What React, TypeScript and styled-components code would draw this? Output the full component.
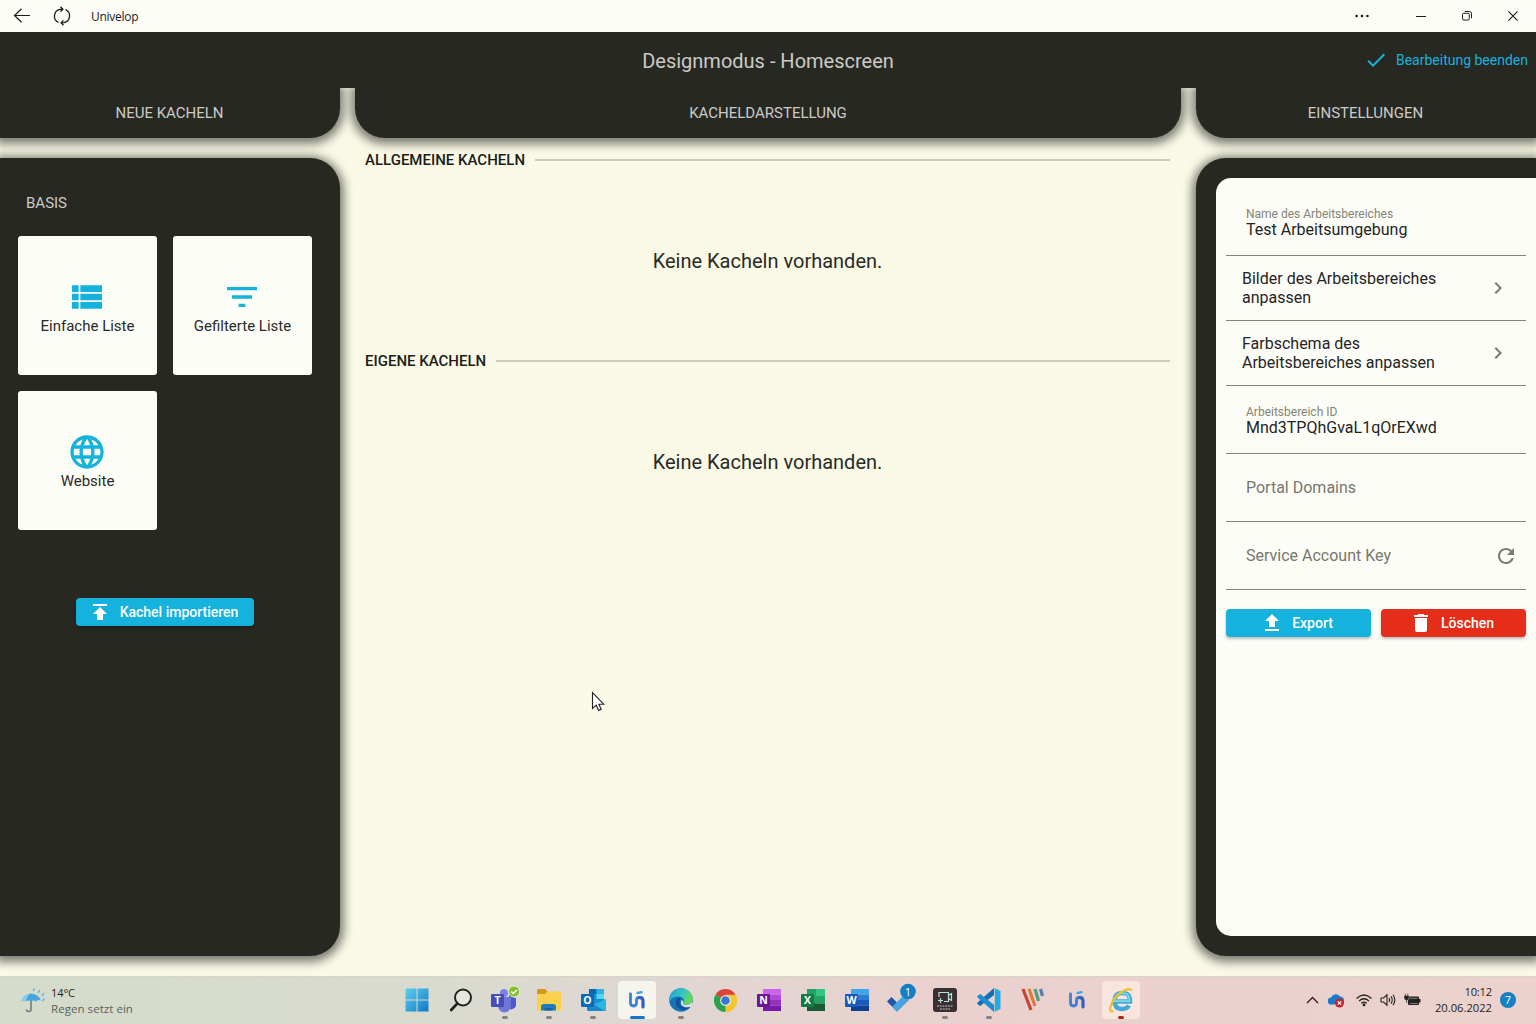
import React from "react";
import styled, { createGlobalStyle } from "styled-components";

const dark = "#282823";
const page = "#f9f9e6";
const white = "#fdfdf8";
const cyan = "#16b2de";
const shadow = "0 2px 10px 4px rgba(0, 0, 0, 0.5)";

const GlobalStyle = createGlobalStyle`
  * { box-sizing: border-box; }
  body { margin: 0; background: ${page}; font-family: Roboto, "Liberation Sans", sans-serif; }
  svg { display: block; flex: none; }
`;

const Screen = styled.div`
  position: relative;
  display: flex;
  flex-direction: column;
  width: 1536px;
  height: 1024px;
  overflow: hidden;
  background: ${page};
`;

/* Window title bar */
const TitleBar = styled.div`
  display: flex;
  align-items: center;
  justify-content: space-between;
  height: 32px;
  flex: none;
  background: ${white};
  padding: 0 16px 0 13px;
  position: relative;
  z-index: 3;
`;
const TitleGroup = styled.div<{ $gap: number }>`
  display: flex;
  align-items: center;
  gap: ${(p) => p.$gap}px;
`;
const WindowTitle = styled.span`
  font: 12px/16px "Open Sans", "Noto Sans", sans-serif;
  color: #1b1b1b;
  letter-spacing: -0.28px;
  padding-top: 1px;
`;
const WindowButtons = styled.div`
  display: flex;
  align-items: center;
  margin-right: -16px;
`;
const WindowButton = styled.div<{ $w: number }>`
  display: flex;
  justify-content: center;
  width: ${(p) => p.$w}px;
`;

/* App header */
const Header = styled.header`
  display: grid;
  grid-template-columns: 1fr auto 1fr;
  align-items: center;
  height: 56px;
  flex: none;
  background: ${dark};
  color: #cbcbc6;
  padding: 0 8px;
  position: relative;
  z-index: 2;
`;
const HeaderTitle = styled.h1`
  grid-column: 2;
  margin: 0;
  font-size: 20px;
  font-weight: 400;
  line-height: 24px;
  padding-top: 2px;
`;
const FinishButton = styled.div`
  display: flex;
  align-items: center;
  justify-content: flex-end;
  gap: 8px;
  color: ${cyan};
  font-size: 14px;
  line-height: 20px;
`;

const columns = "340px 826px 340px";

const Tabs = styled.div`
  display: grid;
  grid-template-columns: ${columns};
  column-gap: 15px;
  height: 50px;
  flex: none;
  position: relative;
  z-index: 1;
`;
const Tab = styled.div<{ $radius: string; $inset?: number }>`
  display: flex;
  align-items: center;
  justify-content: center;
  padding-right: ${(p) => p.$inset || 0}px;
  background: ${dark};
  color: #cbcbc6;
  font-size: 15px;
  border-radius: ${(p) => p.$radius};
  box-shadow: ${shadow};
`;

const Body = styled.div`
  display: grid;
  grid-template-columns: ${columns};
  column-gap: 15px;
  flex: 1;
  min-height: 0;
`;
const Side = styled.aside<{ $radius: string }>`
  margin: 20px 0;
  background: ${dark};
  border-radius: ${(p) => p.$radius};
  box-shadow: ${shadow};
`;
const LeftPanel = styled(Side)`
  display: flex;
  flex-direction: column;
  padding: 35px 18px 0;
`;
const GroupLabel = styled.div`
  color: #cbcbc6;
  font-size: 15px;
  line-height: 20px;
  padding-left: 8px;
`;
const TileGrid = styled.div`
  display: grid;
  grid-template-columns: repeat(2, 139px);
  gap: 16px;
  margin-top: 23px;
`;
const Tile = styled.div`
  display: flex;
  flex-direction: column;
  align-items: center;
  height: 139px;
  padding-top: 41px;
  background: ${white};
  border-radius: 3px;
  color: #2a2a26;
  font-size: 15px;
  line-height: 18px;
  svg { margin-right: 1px; }
`;
const Button = styled.div<{ $bg: string; $w: number }>`
  display: flex;
  align-items: center;
  justify-content: center;
  gap: 8px;
  width: ${(p) => p.$w}px;
  height: 28px;
  padding-right: 4px;
  background: ${(p) => p.$bg};
  color: #fdfdf8;
  border-radius: 4px;
  font-size: 14px;
  font-weight: 500;
  box-shadow: 0 2px 3px rgba(0, 0, 0, 0.25);
`;
const ImportRow = styled.div`
  display: flex;
  margin: 68px 0 0 58px;
`;

/* Centre column */
const Center = styled.main`
  padding: 12px 11px 0 10px;
`;
const Section = styled.section`
  height: 201px;
`;
const SectionHead = styled.div`
  display: flex;
  align-items: center;
  gap: 10px;
  color: #1c1c18;
  font-size: 15px;
  font-weight: 500;
  line-height: 20px;
  white-space: nowrap;
  &::after {
    content: "";
    flex: 1;
    height: 2px;
    background: #cbcbb8;
  }
`;
const Empty = styled.p`
  margin: 79px 0 0;
  text-align: center;
  font-size: 20px;
  line-height: 24px;
  color: #2a2a26;
`;

/* Settings */
const RightPanel = styled(Side)`
  padding: 20px 0 20px 20px;
`;
const Card = styled.div`
  height: 100%;
  background: ${white};
  border-radius: 15px 0 0 15px;
  padding: 10px;
`;
const Field = styled.div<{ $muted?: boolean }>`
  display: flex;
  align-items: center;
  justify-content: space-between;
  height: 68px;
  padding: 0 8px 0 20px;
  border-bottom: 1px solid #858578;
  font-size: 16px;
  line-height: 16px;
  color: ${(p) => (p.$muted ? "#77776c" : "#24241f")};
  svg { margin-top: 1px; }
`;
const FieldLabel = styled.div`
  font-size: 12px;
  line-height: 16px;
  color: #838376;
`;
const FieldText = styled.div`
  flex: 1;
`;
const LinkRow = styled.div`
  display: flex;
  align-items: center;
  justify-content: space-between;
  height: 65px;
  padding: 0 16px;
  border-bottom: 1px solid #858578;
  font-size: 16px;
  line-height: 19px;
  color: #24241f;
`;
const LinkText = styled.span`
  width: 200px;
`;
const ButtonRow = styled.div`
  display: flex;
  gap: 10px;
  margin-top: 19px;
`;

/* Taskbar */
const Taskbar = styled.footer`
  display: grid;
  grid-template-columns: 1fr auto 1fr;
  height: 48px;
  flex: none;
  background: linear-gradient(90deg, #d5dccb 0%, #d8dbce 25%, #dfd7d2 42%, #ead1cf 62%, #ecd1cc 100%);
  border-top: 1px solid #d6d6c6;
  font-family: "Open Sans", "Noto Sans", sans-serif;
  position: relative;
  z-index: 2;
`;
const Weather = styled.div`
  display: flex;
  align-items: center;
  gap: 5px;
  padding-left: 20px;
  padding-top: 1px;
`;
const SmallText = styled.div<{ $c?: string; $size?: number; $ls?: number }>`
  font-size: ${(p) => p.$size || 11}px;
  line-height: 16px;
  color: ${(p) => p.$c || "#1f1f1f"};
  letter-spacing: ${(p) => p.$ls || 0}px;
`;
const Dock = styled.div`
  display: flex;
  padding-left: 2px;
`;
const Slot = styled.div<{ $active?: string }>`
  position: relative;
  display: flex;
  align-items: center;
  justify-content: center;
  width: 38px;
  height: 38px;
  margin: 4px 3px;
  border-radius: 4px;
  background: ${(p) => p.$active || "transparent"};
`;
const Mark = styled.i<{ $w: number; $c: string }>`
  position: absolute;
  bottom: 0;
  left: ${(p) => 19 - p.$w / 2}px;
  width: ${(p) => p.$w}px;
  height: 3px;
  border-radius: 2px;
  background: ${(p) => p.$c};
`;
const Tray = styled.div`
  display: flex;
  align-items: center;
  justify-content: flex-end;
  padding-right: 20px;
`;
const TrayIcons = styled.div`
  display: flex;
  align-items: center;
  gap: 7px;
  margin-right: 14px;
  padding-bottom: 1px;
  svg:nth-child(2) { margin: 0 3px 0 1px; }
`;
const Clock = styled.div`
  text-align: right;
  margin-right: 8px;
  padding-bottom: 1px;
`;
const Count = styled.div`
  display: flex;
  align-items: center;
  justify-content: center;
  width: 16px;
  height: 16px;
  margin-bottom: 1px;
  border-radius: 50%;
  background: #1580c6;
  color: #fff;
  font-size: 11px;
  line-height: 16px;
`;
const Pointer = styled.svg`
  position: absolute;
  left: 591px;
  top: 691px;
  z-index: 5;
`;

const paths = {
  list: "M3 14h4v-4H3v4zm0 5h4v-4H3v4zM3 9h4V5H3v4zm5 5h13v-4H8v4zm0 5h13v-4H8v4zM8 5v4h13V5H8z",
  filter: "M10 18h4v-2h-4v2zM3 6v2h18V6H3zm3 7h12v-2H6v2z",
  globe:
    "M11.99 2C6.47 2 2 6.48 2 12s4.47 10 9.99 10C17.52 22 22 17.52 22 12S17.52 2 11.99 2zm6.93 6h-2.95c-.32-1.25-.78-2.45-1.38-3.56 1.84.63 3.37 1.91 4.33 3.56zM12 4.04c.83 1.2 1.48 2.53 1.91 3.96h-3.82c.43-1.43 1.08-2.76 1.91-3.96zM4.26 14C4.1 13.36 4 12.69 4 12s.1-1.36.26-2h3.38c-.08.66-.14 1.32-.14 2 0 .68.06 1.34.14 2H4.26zm.82 2h2.95c.32 1.25.78 2.45 1.38 3.56-1.84-.63-3.37-1.9-4.33-3.56zm2.95-8H5.08c.96-1.66 2.49-2.93 4.33-3.56C8.81 5.55 8.35 6.75 8.03 8zM12 19.96c-.83-1.2-1.48-2.53-1.91-3.96h3.82c-.43 1.43-1.08 2.76-1.91 3.96zM14.34 14H9.66c-.09-.66-.16-1.32-.16-2 0-.68.07-1.35.16-2h4.68c.09.65.16 1.32.16 2 0 .68-.07 1.34-.16 2zm.25 5.56c.6-1.11 1.06-2.31 1.38-3.56h2.95c-.96 1.65-2.49 2.93-4.33 3.56zM16.36 14c.08-.66.14-1.32.14-2 0-.68-.06-1.34-.14-2h3.38c.16.64.26 1.31.26 2s-.1 1.36-.26 2h-3.38z",
  publish: "M5 4v2h14V4H5zm0 10h4v6h6v-6h4l-7-7-7 7z",
  upload: "M9 16h6v-6h4l-7-7-7 7h4zm-4 2h14v2H5z",
  trash: "M6 19c0 1.1.9 2 2 2h8c1.1 0 2-.9 2-2V7H6v12zM19 4h-3.5l-1-1h-5l-1 1H5v2h14V4z",
  refresh:
    "M17.65 6.35C16.2 4.9 14.21 4 12 4c-4.42 0-7.99 3.58-7.99 8s3.57 8 7.99 8c3.73 0 6.84-2.55 7.73-6h-2.08c-.82 2.33-3.04 4-5.65 4-3.31 0-6-2.69-6-6s2.69-6 6-6c1.66 0 3.14.69 4.22 1.78L13 11h7V4l-2.35 2.35z",
  check: "M9 16.17 4.83 12l-1.42 1.41L9 19 21 7l-1.41-1.41z",
  chevron: "M10 6 8.59 7.41 13.17 12l-4.58 4.59L10 18l6-6z",
};

const Icon = ({ name, size, color }: { name: keyof typeof paths; size: number; color: string }) => (
  <svg width={size} height={size} viewBox="0 0 24 24" fill={color}>
    <path d={paths[name]} />
  </svg>
);

const svgText = { fontFamily: '"Open Sans", sans-serif', fontWeight: 700, fill: "#fff", textAnchor: "middle" as const };

const Windows = () => (
  <svg width="24" height="24" viewBox="0 0 24 24">
    <defs>
      <linearGradient id="win" x1="0" y1="0" x2="1" y2="1">
        <stop offset="0" stopColor="#5fd0f0" />
        <stop offset="1" stopColor="#0f78c4" />
      </linearGradient>
    </defs>
    <path fill="url(#win)" d="M1.5 0.5H11.5V11.5H0.5V1.5zM12.5 .5H23.5V11.5H12.5zM.5 12.5H11.5V23.5H.5zM12.5 12.5H23.5V23.5H12.5z" />
  </svg>
);
const Search = () => (
  <svg width="24" height="24" viewBox="0 0 24 24" fill="none" stroke="#222">
    <circle cx="14" cy="9.5" r="8" strokeWidth="2" fill="#e6e8e0" />
    <path d="M8.4 15.4 2.2 22" strokeWidth="2.8" strokeLinecap="round" />
  </svg>
);
const Teams = () => (
  <svg width="30" height="28" viewBox="0 0 30 28">
    <circle cx="14" cy="7" r="4" fill="#7b83eb" />
    <circle cx="22" cy="9" r="3.2" fill="#5059c9" />
    <path d="M16 12h10v8a5 5 0 0 1-9 1z" fill="#5059c9" />
    <path d="M8 11h13v9a6.500 6.500 0 0 1-13 0z" fill="#6f76d8" />
    <rect x="1" y="8" width="13" height="13" rx="1.200" fill="#464eb8" />
    <text x="7.500" y="18.300" fontSize="10.500" {...svgText}>T</text>
    <circle cx="24" cy="5.500" r="5.500" fill="#84bf2a" stroke="#e7efda" />
    <path d="m21.300 5.600 2 2 3.600-3.700" stroke="#fff" strokeWidth="1.500" fill="none" />
  </svg>
);
const Explorer = () => (
  <svg width="26" height="24" viewBox="0 0 26 24">
    <path d="M1 2.500Q1 1 2.500 1H9l3 3v4H1z" fill="#d9941c" />
    <path d="M1 6h8l2.500-2.500H24Q25 3.500 25 5v16q0 1.500-1.500 1.500h-21Q1 22.500 1 21z" fill="#fbd04a" />
    <path d="M5 22.500v-4q0-2.500 2.500-2.500h10q2.500 0 2.500 2.500v4z" fill="#1c7cbf" />
    <path d="M8.500 22.500V20h8v2.500z" fill="#1262a0" />
  </svg>
);
const Outlook = () => (
  <svg width="25" height="24" viewBox="0 0 25 24">
    <rect x="8" y="1" width="15" height="15" fill="#1490d8" />
    <path d="M8 1h7.500v5H8z" fill="#1066b0" />
    <path d="M15.500 1H23v5h-7.500z" fill="#32aee2" />
    <path d="M15.500 6H23v5h-7.500z" fill="#50d9ee" />
    <path d="M6 11 15.500 17 25 11v10.500q0 1.500-1.500 1.500h-16Q6 23 6 21.500z" fill="#1b86cc" />
    <path d="M25 11v10.500q0 1.500-1.500 1.500L13 16.500z" fill="#2cb4e2" />
    <rect x="0" y="6" width="13" height="13" rx="1.200" fill="#0b69b7" />
    <text x="6.500" y="16.200" fontSize="10.500" {...svgText}>O</text>
  </svg>
);
const Univelop = () => (
  <svg width="18" height="20" viewBox="0 0 18 20" fill="none" strokeWidth="2.800" strokeLinecap="round">
    <path d="M2.500 4v8.500q0 3.500 3 3.500t3-3.500V10q0-2.500 3-2.500T15 10.500V17" stroke="#3d7fd6" />
    <path d="M11.500 7.500Q15 7.500 15 10.500V17" stroke="#3560c0" />
    <path d="m9.500 3 4-.8" stroke="#38a6e6" strokeWidth="2.300" />
  </svg>
);
const Edge = () => (
  <svg width="24" height="24" viewBox="0 0 24 24">
    <defs>
      <linearGradient id="edge" x1="0" y1="0" x2="1" y2=".4">
        <stop offset="0" stopColor="#219fd2" />
        <stop offset=".6" stopColor="#39c6c0" />
        <stop offset="1" stopColor="#65d957" />
      </linearGradient>
    </defs>
    <circle cx="12" cy="12" r="11.800" fill="#1572bd" />
    <path d="M.2 11C1 4 6 .2 12 .2c7 0 11.800 5 11.800 10.600 0 4-3 6-6.500 6-3 0-4-1-3-2.400 1.700-2.400-.2-5.900-4.300-5.900C5.500 8.500 1.500 10 .2 15z" fill="url(#edge)" />
    <path d="M9 10c-3 2-3 7 .5 10 3.500 3 8.500 2 11.500-1-5 2-10.500-.5-10.500-5 0-1.500.5-3 1.500-3.700C11 9.500 10 9.500 9 10z" fill="#124f94" />
    <path d="M14.200 14.700c-1 1.200 0 2.100 3.100 2.100 2.200 0 4.200-.8 5.400-2.300l1.300.2-1.500 4-2 .2q-5 1.600-8.400-2.200-.8-2.500.6-4.800 2 .8 1.500 2.800z" fill="#e2dcdc" />
  </svg>
);
const Chrome = () => (
  <svg width="23" height="23" viewBox="0 0 24 24">
    <path d="M12 12 1.600 6A12 12 0 0 1 22.400 6z" fill="#dc4437" />
    <path d="M12 12 22.400 6A12 12 0 0 1 12 24z" fill="#f6c42c" />
    <path d="M12 12V24A12 12 0 0 1 1.600 6z" fill="#2ba24c" />
    <path d="M12 6H22.400A12 12 0 0 1 12 24l5.200-9z" fill="#f6c42c" />
    <circle cx="12" cy="12" r="5.600" fill="#f4f4f4" />
    <circle cx="12" cy="12" r="4.500" fill="#3977d8" />
  </svg>
);
const Office = ({ letter, colors }: { letter: string; colors: string[] }) => (
  <svg width="24" height="24" viewBox="0 0 24 24">
    <path d={letter === "X" ? "M6 1h9v22H6z" : "M6 1h18v5.500H6z"} fill={colors[0]} />
    {letter === "X" ? (
      <>
        <path d="M15 1h9v7h-9z" fill="#33c481" />
        <path d="M15 8h9v7.500h-9z" fill="#21a366" />
        <path d="M6 15.500h18V23H6z" fill="#185c37" />
      </>
    ) : (
      <>
        <path d="M6 6.500h18V12H6z" fill={colors[1]} />
        <path d="M6 12h18v5.500H6z" fill={colors[2]} />
        <path d="M6 17.500h18V23H6z" fill={colors[3]} />
      </>
    )}
    <rect x="0" y="6" width="13" height="13" rx="1" fill={colors[4]} />
    <text x="6.500" y="16.200" fontSize="10.500" {...svgText}>{letter}</text>
  </svg>
);
const Todo = () => (
  <svg width="30" height="34" viewBox="0 0 30 34">
    <path d="m1 18.500 4.500-4.500 5.500 5.500L6.500 24z" fill="#2356a6" />
    <path d="m6 24 12-12 5 5L11 29z" fill="#4aa3e0" />
    <circle cx="22" cy="8.500" r="7.800" fill="#1480c4" />
    <text x="22" y="12.500" fontSize="11" {...svgText} fontWeight={400}>1</text>
  </svg>
);
const Recorder = () => (
  <svg width="24" height="24" viewBox="0 0 24 24">
    <rect width="24" height="24" rx="3" fill="#3a3033" />
    <path d="M6 9V4.500h9.500v9H11M15.500 7.500l3-2v7l-3-2M5 12.500h5M7.500 10v5" fill="none" stroke="#b9e0da" strokeWidth="1.200" />
    <path d="M4 18h16M7 21h10" stroke="#cbbcbc" strokeDasharray="2 .7" strokeWidth="1.100" />
  </svg>
);
const VsCode = () => (
  <svg width="24" height="24" viewBox="0 0 24 24">
    <path d="M17 0v7L3.200 18 .3 16v-1.200z" fill="#1270b2" />
    <path d="m17 24 .2-7L3.200 6 .3 8v1.200z" fill="#1c8ed0" />
    <path d="m17 0 6.500 3v18L17 24q.8-.8.8-2V2q0-1.200-.8-2z" fill="#25aae2" />
  </svg>
);
const Stripes = () => (
  <svg width="24" height="24" viewBox="0 0 24 24" fill="none" strokeWidth="3.200">
    <path d="m2 1 8 21" stroke="#c64532" />
    <path d="m8 1 6 17" stroke="#df7a3c" />
    <path d="m14 1 3.600 12" stroke="#5a9b77" />
    <path d="m19.500 1 2 7" stroke="#4d7fae" />
  </svg>
);
const Explorer11 = () => (
  <svg width="26" height="26" viewBox="0 0 26 26" fill="none">
    <path d="M6 14.500h16q.5-8.500-7.500-8.500T6.500 14t7.500 8q5 0 7-3.500" stroke="#43a9d6" strokeWidth="4.400" />
    <path d="M6 14.200h15.500q.5-8-7-8T6.500 14" stroke="#7edaf0" strokeWidth="1.800" />
    <path d="M5.500 24Q1 25.500 2.500 20 5 11 13 5.500T24 3.500" stroke="#e9c12c" strokeWidth="2.200" />
  </svg>
);

const grey = "#8b7f86";
const dock: { el: React.ReactNode; active?: string; mark?: [number, string] }[] = [
  { el: <Windows /> },
  { el: <Search /> },
  { el: <Teams />, mark: [6, grey] },
  { el: <Explorer />, mark: [6, grey] },
  { el: <Outlook />, mark: [6, grey] },
  { el: <Univelop />, active: "#f5f4ed", mark: [15, "#1676c4"] },
  { el: <Edge />, mark: [6, grey] },
  { el: <Chrome /> },
  { el: <Office letter="N" colors={["#ca64ea", "#ae4bd5", "#9332bf", "#7719aa", "#6a1794"]} /> },
  { el: <Office letter="X" colors={["#21a366", "", "", "", "#107c41"]} /> },
  { el: <Office letter="W" colors={["#41a5ee", "#2b7cd3", "#185abd", "#103f91", "#185abd"]} /> },
  { el: <Todo /> },
  { el: <Recorder />, mark: [6, grey] },
  { el: <VsCode />, mark: [6, grey] },
  { el: <Stripes /> },
  { el: <Univelop /> },
  { el: <Explorer11 />, active: "#f8e6dc", mark: [6, "#b3261e"] },
];

const tiles: { icon: keyof typeof paths; label: string }[] = [
  { icon: "list", label: "Einfache Liste" },
  { icon: "filter", label: "Gefilterte Liste" },
  { icon: "globe", label: "Website" },
];

export default function App() {
  return (
    <Screen>
      <GlobalStyle />
      <TitleBar>
        <TitleGroup $gap={20}>
          <TitleGroup $gap={22}>
            <svg width="18" height="16" viewBox="0 0 18 16" fill="none" stroke="#1b1b1b" strokeWidth="1.200">
              <path d="M17 7.500H1.500M8.500 .8 1.500 7.500l7 6.700" />
            </svg>
            <svg width="18" height="20" viewBox="0 0 18 20" fill="none" stroke="#1b1b1b" strokeWidth="1.300">
              <path d="M5.500 16.500A7 7 0 0 1 7 3.300l2.500-.1M7.500 .8 9.900 3.200 7.500 5.600" />
              <path d="M12.500 3.500A7 7 0 0 1 11 16.700l-2.500.1M10.500 19.200 8.100 16.800l2.400-2.400" />
            </svg>
          </TitleGroup>
          <WindowTitle>Univelop</WindowTitle>
        </TitleGroup>
        <WindowButtons>
          <WindowButton $w={72}>
            <svg width="14" height="4" viewBox="0 0 14 4" fill="#1b1b1b">
              <circle cx="1.600" cy="2" r="1.300" /><circle cx="7" cy="2" r="1.300" /><circle cx="12.400" cy="2" r="1.300" />
            </svg>
          </WindowButton>
          <WindowButton $w={46}>
            <svg width="10" height="10" viewBox="0 0 10 10" stroke="#1b1b1b"><path d="M0 5.500h10" /></svg>
          </WindowButton>
          <WindowButton $w={46}>
            <svg width="10" height="10" viewBox="0 0 11 11" fill="none" stroke="#1b1b1b" strokeWidth="1.100">
              <rect x=".5" y="2.500" width="7.500" height="7.500" rx="1.500" />
              <path d="M3 .5h5Q10.500 .5 10.500 3v5" />
            </svg>
          </WindowButton>
          <WindowButton $w={46}>
            <svg width="10" height="10" viewBox="0 0 11 11" stroke="#1b1b1b" strokeWidth="1.200"><path d="m.5.5 10 10M10.500.5l-10 10" /></svg>
          </WindowButton>
        </WindowButtons>
      </TitleBar>

      <Header>
        <HeaderTitle>Designmodus - Homescreen</HeaderTitle>
        <FinishButton>
          <Icon name="check" size={24} color={cyan} />
          Bearbeitung beenden
        </FinishButton>
      </Header>

      <Tabs>
        <Tab $radius="0 0 30px 0" $inset={1}>NEUE KACHELN</Tab>
        <Tab $radius="0 0 30px 30px">KACHELDARSTELLUNG</Tab>
        <Tab $radius="0 0 0 30px" $inset={1}>EINSTELLUNGEN</Tab>
      </Tabs>

      <Body>
        <LeftPanel $radius="0 30px 30px 0">
          <GroupLabel>BASIS</GroupLabel>
          <TileGrid>
            {tiles.map((t) => (
              <Tile key={t.label}>
                <Icon name={t.icon} size={40} color={cyan} />
                {t.label}
              </Tile>
            ))}
          </TileGrid>
          <ImportRow>
            <Button $bg={cyan} $w={178}>
              <Icon name="publish" size={24} color="#fff" />
              Kachel importieren
            </Button>
          </ImportRow>
        </LeftPanel>

        <Center>
          {["ALLGEMEINE KACHELN", "EIGENE KACHELN"].map((s) => (
            <Section key={s}>
              <SectionHead>{s}</SectionHead>
              <Empty>Keine Kacheln vorhanden.</Empty>
            </Section>
          ))}
        </Center>

        <RightPanel $radius="30px 0 0 30px">
          <Card>
            <Field>
              <FieldText>
                <FieldLabel>Name des Arbeitsbereiches</FieldLabel>
                Test Arbeitsumgebung
              </FieldText>
            </Field>
            <LinkRow>
              <LinkText>Bilder des Arbeitsbereiches anpassen</LinkText>
              <Icon name="chevron" size={24} color="#7b7b6f" />
            </LinkRow>
            <LinkRow>
              <LinkText>Farbschema des Arbeitsbereiches anpassen</LinkText>
              <Icon name="chevron" size={24} color="#7b7b6f" />
            </LinkRow>
            <Field>
              <FieldText>
                <FieldLabel>Arbeitsbereich ID</FieldLabel>
                Mnd3TPQhGvaL1qOrEXwd
              </FieldText>
            </Field>
            <Field $muted>Portal Domains</Field>
            <Field $muted>
              Service Account Key
              <Icon name="refresh" size={24} color="#7b7b6f" />
            </Field>
            <ButtonRow>
              <Button $bg={cyan} $w={145}>
                <Icon name="upload" size={24} color="#fff" />
                Export
              </Button>
              <Button $bg="#e42e1a" $w={145}>
                <Icon name="trash" size={24} color="#fff" />
                Löschen
              </Button>
            </ButtonRow>
          </Card>
        </RightPanel>
      </Body>

      <Taskbar>
        <Weather>
          <svg width="26" height="26" viewBox="0 0 26 26" fill="none">
            <path d="M1 14Q3 6 11 5.500q8 .5 10 7.500-2.500-2-5 .5-2.500-2-5 0-3-2-5 0Q3.500 12 1 14z" fill="#49a4dc" />
            <path d="M6 13.500Q7 7 11 5.500 8 5 4.500 8T1 14q2.500-2 5-.5z" fill="#86cdee" />
            <path d="M11 13v8.500q0 2-2.200 2t-2.300-2" stroke="#77787c" strokeWidth="1.600" />
            <path d="m13 3 1.500-2.500M18 5l2-3M22 8l2-3M22.500 13l2-2.500" stroke="#6fb7dd" strokeWidth="1.500" />
          </svg>
          <div>
            <SmallText $ls={-0.1}>14°C</SmallText>
            <SmallText $c="#5a5f58" $size={11.5} $ls={0.05}>Regen setzt ein</SmallText>
          </div>
        </Weather>
        <Dock>
          {dock.map((d, i) => (
            <Slot key={i} $active={d.active}>
              {d.el}
              {d.mark && <Mark $w={d.mark[0]} $c={d.mark[1]} />}
            </Slot>
          ))}
        </Dock>
        <Tray>
          <TrayIcons>
            <svg width="13" height="8" viewBox="0 0 13 8" fill="none" stroke="#222" strokeWidth="1.300"><path d="m1 7 5.500-5.500L12 7" /></svg>
            <svg width="18" height="16" viewBox="0 0 18 16">
              <path d="M4.500 12.500a3.500 3.500 0 0 1-.3-7A5 5 0 0 1 13 4.500a4 4 0 0 1 2 7.500z" fill="#1d78c8" />
              <circle cx="12.500" cy="11" r="4.500" fill="#c62632" />
              <path d="m10.800 9.300 3.400 3.400m0-3.400-3.400 3.400" stroke="#fff" strokeWidth="1.200" />
            </svg>
            <svg width="18" height="14" viewBox="0 0 18 14" fill="none" stroke="#222" strokeWidth="1.200">
              <path d="M1.500 5.500q7.500-7 15 0M4 8q5-4.500 10 0M6.300 10.300q2.700-2.400 5.400 0" />
              <circle cx="9" cy="11.800" r=".9" fill="#222" />
            </svg>
            <svg width="16" height="14" viewBox="0 0 16 14" fill="none" stroke="#222" strokeWidth="1.100">
              <path d="M1 5h2.500L7 1.800v10.400L3.500 9H1z" /><path d="M9 5q1.200 2 0 4M11 3.300q2.500 3.700 0 7.400M13 1.800q3.700 5.200 0 10.400" />
            </svg>
            <svg width="18" height="14" viewBox="0 0 18 14" fill="#222">
              <path d="M5 3.500h10q1 0 1 1v1.500h1.500v3.500H16V11q0 1-1 1H6q-1 0-1-1z" />
              <path d="M1 2.500h1V.5h1v2h1.200v-2h1v2h1V5Q6 7 4.200 7.300V10H3V7.300Q1 7 1 5z" stroke="#e9d0cf" strokeWidth=".5" />
              <path d="M7 5.300h7.500M7 10.500h7.500" stroke="#998" strokeWidth=".8" />
            </svg>
          </TrayIcons>
          <Clock>
            <SmallText $ls={-0.2} $size={11.200}>10:12</SmallText>
            <SmallText $size={11.200}>20.06.2022</SmallText>
          </Clock>
          <Count>7</Count>
        </Tray>
      </Taskbar>

      <Pointer width="14" height="21" viewBox="0 0 14 21">
        <path d="M1.500 1.500v16l3.700-3.300 2.400 5.300 2.600-1.200-2.300-5.100h4.800z" fill="#fff" stroke="#222" strokeWidth="1.100" />
      </Pointer>
    </Screen>
  );
}
